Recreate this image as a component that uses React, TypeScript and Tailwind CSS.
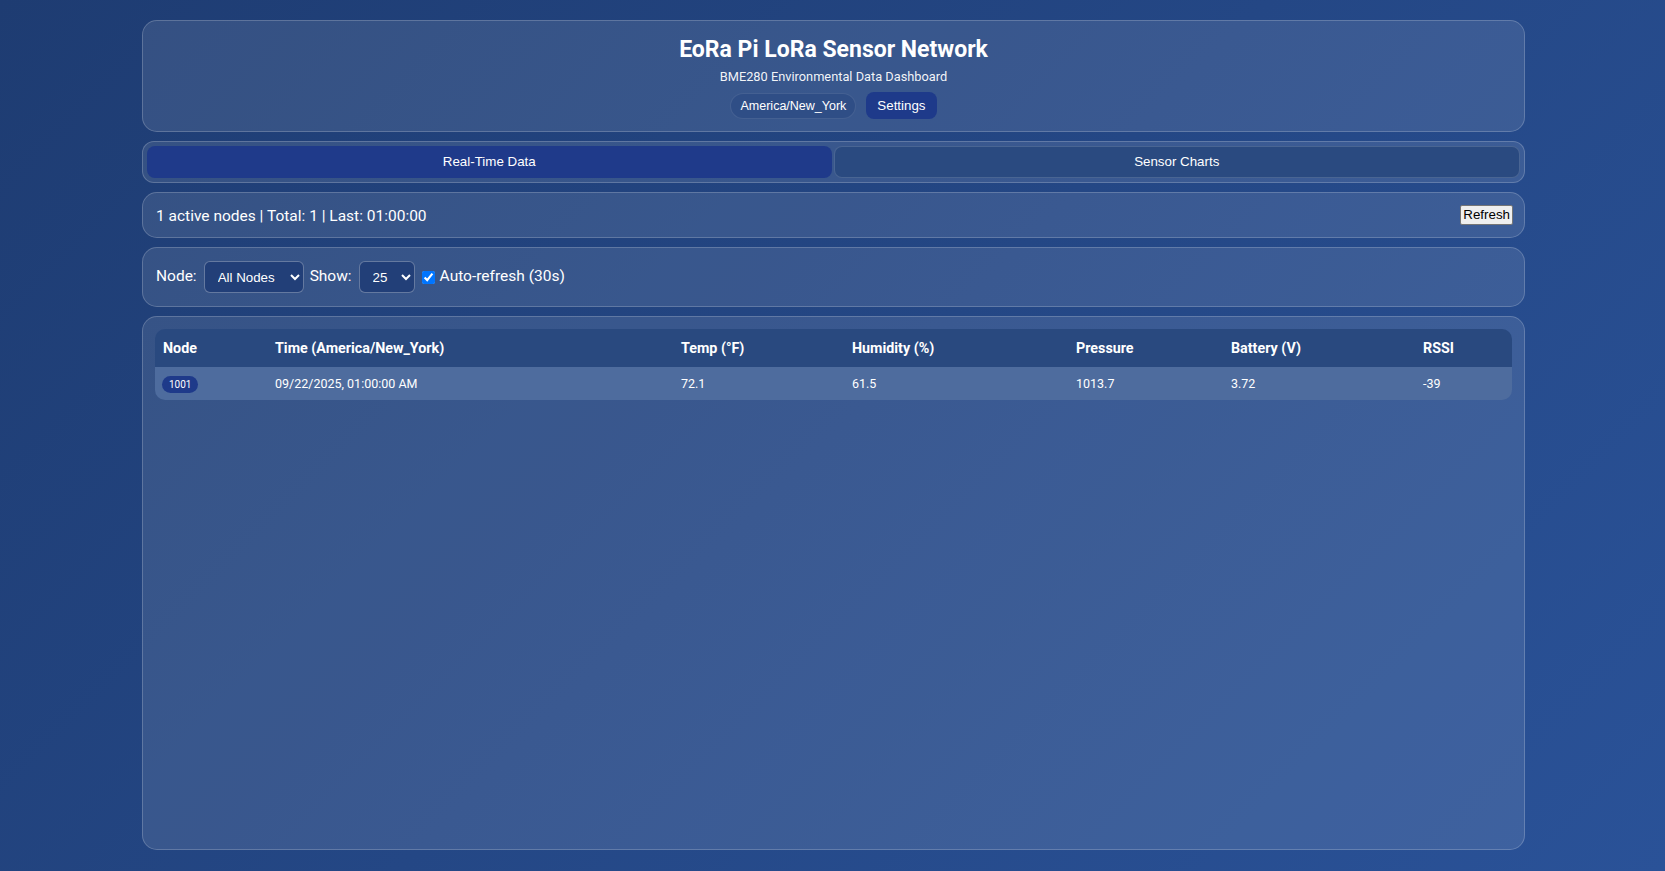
import React from "react";

const body = { fontFamily: "Roboto, 'Noto Sans', sans-serif" };
const ctrl = { fontFamily: "'Liberation Sans', Arial, sans-serif" };

export default function App() {
  const cols = [
    { label: "Node", w: "w-[112px]" },
    { label: "Time (America/New_York)", w: "w-[406px]" },
    { label: "Temp (°F)", w: "w-[171px]" },
    { label: "Humidity (%)", w: "w-[224px]" },
    { label: "Pressure", w: "w-[155px]" },
    { label: "Battery (V)", w: "w-[192px]" },
    { label: "RSSI", w: "w-[97px]" },
  ];
  return (
    <div
      className="h-screen w-full overflow-hidden bg-[linear-gradient(135deg,#1e3c72_0%,#2a5298_100%)] text-white pl-[142px] pr-[140px] pt-[20px] pb-[21px] flex flex-col gap-[9px]"
      style={body}
    >
      {/* Header */}
      <div className="h-[112px] shrink-0 rounded-[15px] border border-white/20 bg-white/10 flex flex-col items-center pt-[14px]">
        <h1 className="text-[23px] leading-[30px] font-bold">EoRa Pi LoRa Sensor Network</h1>
        <p className="mt-[3px] text-[12.8px] leading-[18px] text-white/95">BME280 Environmental Data Dashboard</p>
        <div className="mt-[6px] flex items-center gap-[10px]">
          <span
            className="h-[26px] px-[9px] pt-[1px] flex items-center rounded-[13px] bg-[#2f4e86] border border-white/10 text-[12.5px]"
            style={ctrl}
          >
            America/New_York
          </span>
          <button
            className="h-[27px] px-[11px] rounded-[8px] bg-[#1e3a8a] text-[13.33px] text-white"
            style={ctrl}
          >
            Settings
          </button>
        </div>
      </div>

      {/* Tabs */}
      <div className="h-[42px] shrink-0 rounded-[12px] border border-white/20 bg-white/10 p-[4px] flex gap-[2px]">
        <button
          className="flex-1 h-[32px] rounded-[8px] bg-[#1f3a8a] text-[13.33px] text-white"
          style={ctrl}
        >
          Real-Time Data
        </button>
        <button
          className="flex-1 h-[32px] rounded-[8px] bg-[#2a4a80] border border-white/15 text-[13.33px] text-white"
          style={ctrl}
        >
          Sensor Charts
        </button>
      </div>

      {/* Status */}
      <div className="h-[46px] shrink-0 rounded-[15px] border border-white/20 bg-white/10 pl-[13px] pr-[11px] flex items-center justify-between">
        <span className="text-[15.5px] pt-[3px]">1 active nodes | Total: 1 | Last: 01:00:00</span>
        <button
          className="h-[20px] px-[2px] bg-[#efefef] border border-[#767676] rounded-[2px] text-black text-[13.33px] leading-none -mt-[1px]"
          style={ctrl}
        >
          Refresh
        </button>
      </div>

      {/* Filters */}
      <div className="h-[60px] shrink-0 rounded-[15px] border border-white/20 bg-white/10 px-[13px] flex items-center text-[15.5px]">
        <span>Node:</span>
        <select
          className="ml-[7px] w-[100px] h-[32px] pl-[9px] rounded-[6px] bg-[#223f78] border border-white/30 text-white text-[13.33px]"
          style={ctrl}
          defaultValue="all"
        >
          <option value="all">All Nodes</option>
        </select>
        <span className="ml-[6px]">Show:</span>
        <select
          className="ml-[7px] w-[56px] h-[32px] pl-[9px] rounded-[6px] bg-[#223f78] border border-white/30 text-white text-[13.33px]"
          style={ctrl}
          defaultValue="25"
        >
          <option value="25">25</option>
        </select>
        <input type="checkbox" defaultChecked className="ml-[7px] mr-[5px] w-[13px] h-[13px]" />
        <span>Auto-refresh (30s)</span>
      </div>

      {/* Table */}
      <div className="flex-1 rounded-[15px] border border-white/20 bg-white/10 p-[12px]">
        <div className="rounded-[10px] overflow-hidden">
          <table className="w-full border-collapse table-fixed">
            <thead>
              <tr className="bg-[#29497f] h-[38px]">
                {cols.map((c) => (
                  <th key={c.label} className={`${c.w} text-left font-bold text-[14.3px] px-[8px] pt-[2px]`}>
                    {c.label}
                  </th>
                ))}
              </tr>
            </thead>
            <tbody className="text-[12.5px]">
              <tr className="bg-[#4e6c9e] h-[33px]">
                <td className="px-[7px] pt-[1px]">
                  <span className="inline-flex items-center h-[17px] px-[7px] rounded-full bg-[#1e3a8a] text-[10px]">1001</span>
                </td>
                <td className="px-[8px] pt-[2px]">09/22/2025, 01:00:00 AM</td>
                <td className="px-[8px] pt-[2px]">72.1</td>
                <td className="px-[8px] pt-[2px]">61.5</td>
                <td className="px-[8px] pt-[2px]">1013.7</td>
                <td className="px-[8px] pt-[2px]">3.72</td>
                <td className="px-[8px] pt-[2px]">-39</td>
              </tr>
            </tbody>
          </table>
        </div>
      </div>
    </div>
  );
}
